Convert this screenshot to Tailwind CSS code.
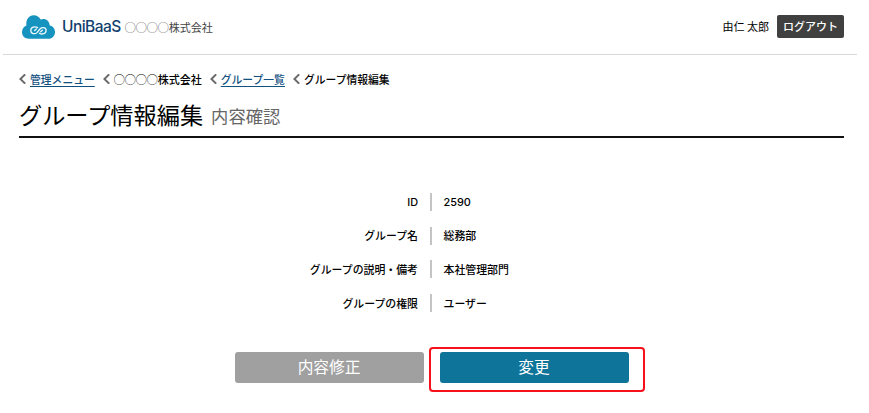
<!DOCTYPE html>
<html lang="ja">
<head>
  <meta charset="UTF-8" />
  <meta name="viewport" content="width=device-width, initial-scale=1.0">
  <title>グループ情報編集 | UniBaaS</title>
  <script src="https://cdn.jsdelivr.net/npm/@tailwindcss/browser@4"></script>
</head>
<body class="bg-white text-black font-['Noto_Sans_CJK_JP',sans-serif]">

  <div class="w-[869px] h-[413px] overflow-hidden">

    <!-- Header -->
    <header class="ml-[3px] mr-3 h-[55px] border-b border-[#d8d8d8] flex items-center justify-between pl-[19px] pr-[13px]">
      <div class="flex items-center -mt-px">
        <svg class="w-[33px] h-[24px] shrink-0" viewBox="0 0 33 24">
          <path d="M7 23.8 C3 23.8 0 21 0 17.3 C0 13.8 1.8 11.2 4.4 10.4 C3.7 4.6 7 0.3 11.6 0.3 C15 0.3 17.4 2 18.6 4.6 C23.2 2.8 27.4 5.6 27.7 10.4 C31 11 33 13.6 33 17 C33 20.9 30.2 23.8 26.5 23.8 Z" fill="#1793c0"/>
          <path d="M15.6 12.6 C13 11 8.8 12 8.8 15.4 C8.8 18.9 13 19.5 15 17.6 L18.2 13.8 C20.2 11.9 24.1 12.2 24.1 15.4 C24.1 18.8 20 19.8 17.4 18.2 M12.6 15.6 L14.4 14 M18.6 16.8 L20.4 15.2" fill="none" stroke="#eef9fc" stroke-width="1.3" stroke-linecap="round"/>
        </svg>
        <span class="ml-[7px] font-['Inter',sans-serif] text-[15.5px] leading-6 font-medium tracking-[-0.55px] text-[#123f6e]">UniBaaS</span>
        <span class="ml-1 text-[11px] leading-6 text-[#444]">◯◯◯◯株式会社</span>
      </div>
      <div class="flex items-center -mt-px">
        <span class="text-[11px]">由仁 太郎</span>
        <button class="ml-2 w-[67px] h-[23px] rounded-[2px] bg-[#404040] text-white text-[11px] leading-none font-medium">ログアウト</button>
      </div>
    </header>

    <main class="pl-[19px] pr-[25px]">
      <!-- Breadcrumbs -->
      <nav class="mt-[15px] h-[18px] flex items-center text-[10.8px] leading-[18px] font-medium">
        <svg class="w-[7px] h-[10px] mr-1" viewBox="0 0 7 10"><path d="M6.2 .3 L1.4 5 L6.2 9.7" fill="none" stroke="#6b6b6b" stroke-width="2"/></svg>
        <a href="#" class="text-[#12507f] underline underline-offset-2">管理メニュー</a>
        <svg class="w-[7px] h-[10px] ml-2 mr-1" viewBox="0 0 7 10"><path d="M6.2 .3 L1.4 5 L6.2 9.7" fill="none" stroke="#6b6b6b" stroke-width="2"/></svg>
        <span class="text-[11px]">◯◯◯◯株式会社</span>
        <svg class="w-[7px] h-[10px] ml-2 mr-1" viewBox="0 0 7 10"><path d="M6.2 .3 L1.4 5 L6.2 9.7" fill="none" stroke="#6b6b6b" stroke-width="2"/></svg>
        <a href="#" class="text-[#12507f] underline underline-offset-2">グループ一覧</a>
        <svg class="w-[7px] h-[10px] ml-2 mr-1" viewBox="0 0 7 10"><path d="M6.2 .3 L1.4 5 L6.2 9.7" fill="none" stroke="#6b6b6b" stroke-width="2"/></svg>
        <span>グループ情報編集</span>
      </nav>

      <!-- Page title -->
      <div class="mt-2 h-[42px] border-b-2 border-[#111] flex items-baseline leading-9">
        <h1 class="text-[23.2px]">グループ情報編集</h1>
        <span class="relative -top-px ml-2 text-[17.3px] text-[#666]">内容確認</span>
      </div>
    </main>

    <!-- Details -->
    <dl class="mt-[47px] flex flex-col text-[10.9px] font-medium">
      <div class="h-[33.7px] flex items-center">
        <dt class="w-[418px] text-right font-['Inter',sans-serif]">ID</dt>
        <dd class="ml-3 h-[18px] border-l-2 border-[#c4c4c4] pl-[11.5px] leading-[18px] font-['Inter',sans-serif]">2590</dd>
      </div>
      <div class="h-[33.7px] flex items-center">
        <dt class="w-[418px] text-right">グループ名</dt>
        <dd class="ml-3 h-[18px] border-l-2 border-[#c4c4c4] pl-[11.5px] leading-[17px]">総務部</dd>
      </div>
      <div class="h-[33.7px] flex items-center">
        <dt class="w-[418px] text-right">グループの説明・備考</dt>
        <dd class="ml-3 h-[18px] border-l-2 border-[#c4c4c4] pl-[11.5px] leading-[18px]">本社管理部門</dd>
      </div>
      <div class="h-[33.7px] flex items-center">
        <dt class="w-[418px] text-right">グループの権限</dt>
        <dd class="ml-3 h-[18px] border-l-2 border-[#c4c4c4] pl-[11.5px] leading-[18px]">ユーザー</dd>
      </div>
    </dl>

    <!-- Actions -->
    <div class="mt-[27px] ml-[235px] flex items-start">
      <button class="mt-[5px] w-[189px] h-[31px] rounded-[3px] bg-[#a0a0a0] pr-px text-white text-[15.7px] leading-none">内容修正</button>
      <div class="ml-[5px] w-[216px] h-[45px] border-2 border-[#f5101c] rounded-[4px] pt-[3px] pl-[9px]">
        <button class="block w-[189px] h-[31px] rounded-[3px] bg-[#0f7499] pr-px text-white text-[15.7px] leading-none">変更</button>
      </div>
    </div>

  </div>

</body>
</html>
